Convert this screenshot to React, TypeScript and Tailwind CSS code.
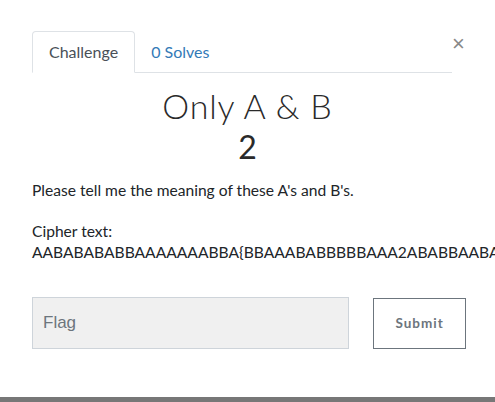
export default function App() {
  return (
    <div className="w-[495px] h-[402px] overflow-hidden bg-white flex flex-col font-['Lato',sans-serif] text-[#212529]">
      <div className="relative flex-1 px-8 pt-8">
        <div className="flex items-end w-[420px] border-b border-[#dee2e6] h-[41px]">
          <div className="h-[42px] px-[16px] flex items-center border border-[#dee2e6] border-b-white rounded-t bg-white text-[16px] text-[#495057] -mb-px">
            Challenge
          </div>
          <div className="h-[41px] px-[16px] flex items-center text-[16px] text-[#337ab7]">0 Solves</div>
        </div>
        <button className="absolute left-[452px] top-[33px] text-[22px] leading-none text-[#888] font-['Liberation_Sans',sans-serif]">
          ×
        </button>
        <h3 className="mt-[12px] text-center text-[34px] font-light leading-[42px] tracking-wide text-[#2a2a2a]">
          Only A &amp; B
        </h3>
        <h4 className="text-center text-[32px] font-normal leading-[40px] text-[#2a2a2a]">2</h4>
        <p className="mt-[13px] text-[15.6px] leading-[21px]">Please tell me the meaning of these A's and B's.</p>
        <p className="mt-[20px] text-[15.6px] leading-[21px] whitespace-nowrap">
          Cipher text:
          <br />
          AABABABABBAAAAAAABBA&#123;BBAAABABBBBBAAA2ABABBAABABBAAABBAABBBABAB&#125;
        </p>
        <div className="mt-[34px] flex items-center gap-6 w-[434px]">
          <input
            placeholder="Flag"
            className="w-[318px] h-[52px] bg-[#f0f0f0] border border-[#ced4da] px-[10px] text-[17px] font-['Liberation_Sans',sans-serif] placeholder:text-[#6c757d] outline-none"
          />
          <button className="w-[93px] h-[51px] border border-[#6c757d] text-[13.5px] font-bold tracking-[1px] text-[#6c757d]">
            Submit
          </button>
        </div>
      </div>
      <div className="h-[5px] bg-[#777777]" />
    </div>
  );
}
